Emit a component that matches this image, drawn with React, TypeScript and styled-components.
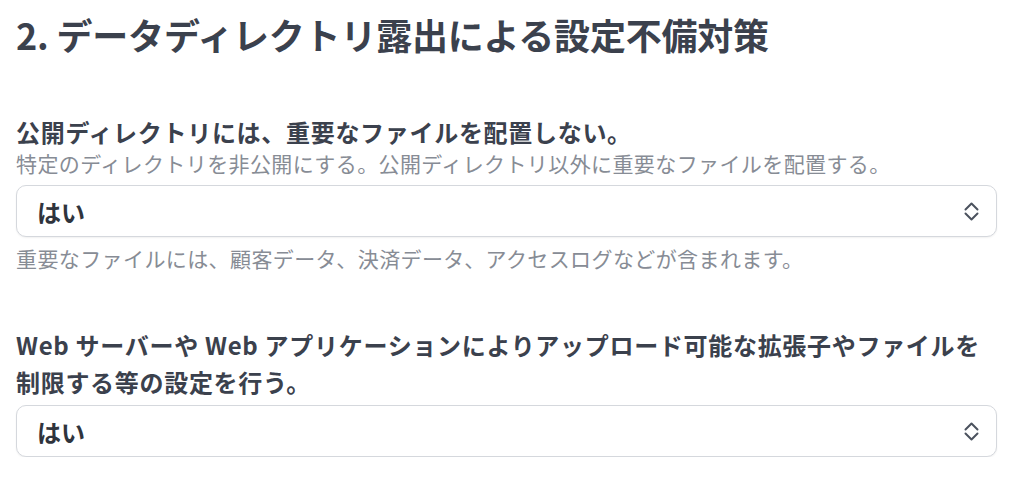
import React from 'react';
import styled, {createGlobalStyle} from 'styled-components';

const GlobalStyle = createGlobalStyle`
  html, body {
    margin: 0;
    padding: 0;
    background: #ffffff;
  }
  body {
    font-family: "Noto Sans CJK JP", "Noto Sans", sans-serif;
    color: #3b414d;
  }
`;

const Page = styled.div`
  width: 1024px;
  box-sizing: border-box;
  padding: 10px 27px 0 16px;
`;

const Title = styled.h2`
  margin: 0 0 55px;
  font-size: 36px;
  line-height: 48px;
  font-weight: 700;
  color: #3b414d;
  letter-spacing: -0.2px;
`;

const Section = styled.section<{ $gap?: number }>`
  display: flex;
  flex-direction: column;
  margin-bottom: ${p => p.$gap ?? 0}px;
`;

const Label = styled.div`
  font-size: 24px;
  line-height: 37px;
  font-weight: 700;
  letter-spacing: 0.7px;
  color: #3b414d;
`;

const Note = styled.div<{ $top?: number }>`
  margin-top: ${p => p.$top ?? 0}px;
  font-size: 21px;
  line-height: 26px;
  font-weight: 400;
  letter-spacing: 0.4px;
  color: #878c95;
`;

const SelectBox = styled.div<{ $top: number }>`
  margin-top: ${p => p.$top}px;
  height: 52px;
  box-sizing: border-box;
  display: flex;
  align-items: center;
  justify-content: space-between;
  padding: 0 16px 0 20px;
  border: 1px solid #d5d8dd;
  border-radius: 10px;
  box-shadow: 0 1px 2px rgba(0, 0, 0, 0.06);
  background: #fff;
`;

const Value = styled.span`
  font-size: 24px;
  font-weight: 700;
  color: #2f343d;
`;

const Chevrons = () => (
  <svg width="17" height="21" viewBox="0 0 17 21" fill="none" stroke="#4b525e"
       strokeWidth="2" strokeLinecap="round" strokeLinejoin="round">
    <path d="M2.5 8.5 L8.5 2.5 L14.5 8.5"/>
    <path d="M2.5 12.5 L8.5 18.5 L14.5 12.5"/>
  </svg>
);

const Select: React.FC<{ value: string; top: number }> = ({value, top}) => (
  <SelectBox $top={top}>
    <Value>{value}</Value>
    <Chevrons/>
  </SelectBox>
);

export default function App() {
  return (
    <>
      <GlobalStyle/>
      <Page>
        <Title>2. データディレクトリ露出による設定不備対策</Title>
        <Section $gap={55}>
          <Label>公開ディレクトリには、重要なファイルを配置しない。</Label>
          <Note>特定のディレクトリを非公開にする。公開ディレクトリ以外に重要なファイルを配置する。</Note>
          <Select value="はい" top={9}/>
          <Note $top={8}>重要なファイルには、顧客データ、決済データ、アクセスログなどが含まれます。</Note>
        </Section>
        <Section>
          <Label>Web サーバーや Web アプリケーションによりアップロード可能な拡張子やファイルを制限する等の設定を行う。</Label>
          <Select value="はい" top={5}/>
        </Section>
      </Page>
    </>
  );
}
